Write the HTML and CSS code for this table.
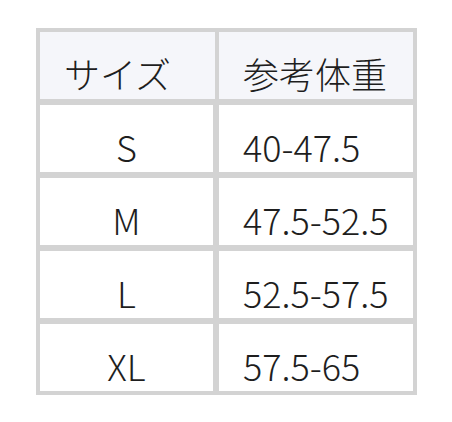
FILE: index.html
```html
<!DOCTYPE html>
<html lang="ja">
<head>
<meta charset="utf-8">
<title>サイズ表</title>
<link rel="stylesheet" href="styles.css">
</head>
<body>
<div class="size-table">
  <div class="cell head head-left">サイズ</div>
  <div class="cell head">参考体重</div>
  <div class="cell size">S</div>
  <div class="cell weight">40-47.5</div>
  <div class="cell size">M</div>
  <div class="cell weight">47.5-52.5</div>
  <div class="cell size">L</div>
  <div class="cell weight">52.5-57.5</div>
  <div class="cell size">XL</div>
  <div class="cell weight">57.5-65</div>
</div>
</body>
</html>
```

FILE: styles.css
```css
html, body {
  margin: 0;
  background: #ffffff;
}
body {
  padding: 28px 0 0 36px;
  font-family: "Noto Sans CJK JP", "Noto Sans", sans-serif;
  color: #1e1e1e;
}
.size-table {
  display: inline-grid;
  grid-template-columns: 173px 194px;
  grid-auto-rows: 67px;
  gap: 6px;
  padding: 4px;
  background: #d3d3d3;
}
.cell {
  background: #ffffff;
  font-size: 36px;
  font-weight: 300;
  line-height: 52px;
  padding-top: 15px;
  box-sizing: border-box;
  white-space: nowrap;
}
.head {
  background: #f5f6fa;
  padding-left: 24px;
}
.head-left {
  margin-right: -2px;
}
.size {
  text-align: center;
}
.weight {
  padding-left: 24px;
}
```
